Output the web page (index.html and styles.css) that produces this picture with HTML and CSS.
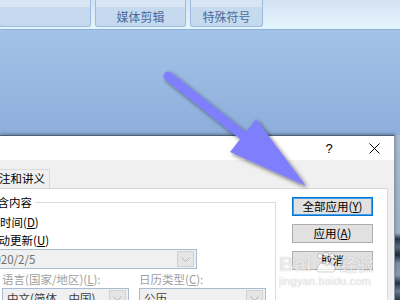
FILE: index.html
```html
<!DOCTYPE html>
<html lang="zh-CN">
<head>
<meta charset="utf-8">
<title>页眉和页脚</title>
<link rel="stylesheet" href="styles.css">
</head>
<body>
<div class="screen">
  <header class="ribbon">
    <div class="rtab rtab-first"><span class="rtab-top"></span><span class="rtab-label"></span></div>
    <div class="rtab rtab-media"><span class="rtab-top"></span><span class="rtab-label">媒体剪辑</span></div>
    <div class="rtab rtab-symbol"><span class="rtab-top"></span><span class="rtab-label">特殊符号</span></div>
  </header>
  <div class="ribbon-edge"></div>
  <div class="workspace"></div>
  <div class="lower">
    <section class="dialog">
      <div class="titlebar">
        <span class="tb-btn tb-help">?</span>
        <span class="tb-btn tb-close">
          <svg width="11" height="11" viewBox="0 0 11 11"><path d="M0.5 0.5 L10.5 10.5 M10.5 0.5 L0.5 10.5" stroke="#000" stroke-width="1" fill="none"/></svg>
        </span>
      </div>
      <div class="client">
        <div class="tabstrip"><div class="dtab">备注和讲义</div></div>
        <div class="panel">
          <div class="group">
            <div class="group-label">包含内容</div>
            <div class="opt opt-date">日期和时间(<u>D</u>)</div>
            <div class="opt opt-auto">自动更新(<u>U</u>)</div>
            <div class="combo combo-date">
              <span class="combo-text combo-text-muted">2020/2/5</span>
              <span class="combo-btn"><svg width="9" height="5" viewBox="0 0 9 5"><path d="M0.5 0.5 L4.5 4.5 L8.5 0.5" stroke="#b4b4b4" fill="none"/></svg></span>
            </div>
            <div class="field-row">
              <div class="field">
                <div class="field-label">语言(国家/地区)(<u>L</u>):</div>
                <div class="combo">
                  <span class="combo-text">中文(简体，中国)</span>
                  <span class="combo-btn"><svg width="9" height="5" viewBox="0 0 9 5"><path d="M0.5 0.5 L4.5 4.5 L8.5 0.5" stroke="#b4b4b4" fill="none"/></svg></span>
                </div>
              </div>
              <div class="field">
                <div class="field-label">日历类型(<u>C</u>):</div>
                <div class="combo">
                  <span class="combo-text">公历</span>
                  <span class="combo-btn"><svg width="9" height="5" viewBox="0 0 9 5"><path d="M0.5 0.5 L4.5 4.5 L8.5 0.5" stroke="#b4b4b4" fill="none"/></svg></span>
                </div>
              </div>
            </div>
          </div>
          <div class="actions">
            <button class="btn btn-default" type="button">全部应用(<u>Y</u>)</button>
            <button class="btn" type="button">应用(<u>A</u>)</button>
            <button class="btn" type="button">取消</button>
          </div>
        </div>
      </div>
    </section>
    <div class="backdrop"></div>
  </div>

  <svg class="arrow" width="400" height="300" viewBox="0 0 400 300" aria-hidden="true">
    <defs>
      <filter id="arrowShadow" x="-20%" y="-20%" width="140%" height="140%">
        <feDropShadow dx="2" dy="2" stdDeviation="2" flood-color="#000" flood-opacity="0.55"/>
      </filter>
    </defs>
    <g filter="url(#arrowShadow)" fill="#7f7ffd">
      <line x1="168" y1="76" x2="246" y2="138" stroke="#7f7ffd" stroke-width="9" stroke-linecap="round"/>
      <polygon points="256,119 306,186 230,152"/>
    </g>
  </svg>

  <div class="watermark" aria-hidden="true">
    <div class="wm-logo">
      <span class="wm-bai">Bai</span>
      <svg class="wm-paw" width="26" height="22" viewBox="0 0 26 22">
        <g fill="rgba(255,255,255,0.75)" stroke="rgba(0,0,0,0.18)" stroke-width="1">
          <circle cx="7" cy="4" r="2.5"/>
          <circle cx="13" cy="2.8" r="2.5"/>
          <circle cx="19" cy="4" r="2.5"/>
          <path d="M6 20 C3 20 3 14 8 11 C11 9 15 9 18 11 C23 14 23 20 20 20 Z"/>
        </g>
      </svg>
      <span class="wm-jy">经验</span>
    </div>
    <div class="wm-url">jingyan.baidu.com</div>
  </div>
</div>
</body>
</html>
```

FILE: styles.css
```css
* {
  box-sizing: border-box;
}

html,
body {
  margin: 0;
  padding: 0;
}

body {
  width: 400px;
  height: 300px;
  overflow: hidden;
  font-family: "Noto Sans CJK SC", "Noto Sans", sans-serif;
  background: #9fbde5;
}

.screen {
  position: relative;
  width: 400px;
  height: 300px;
  overflow: hidden;
  display: flex;
  flex-direction: column;
}

/* ---------- ribbon ---------- */
.ribbon {
  flex: none;
  height: 27px;
  display: flex;
  gap: 4px;
  background: linear-gradient(#d4e2f2, #e4f4fc);
}

.rtab {
  height: 27px;
  display: flex;
  flex-direction: column;
  border: 1px solid #9dbbdf;
  border-top: none;
  border-radius: 0 0 3px 3px;
  background: #c5d9ef;
}

.rtab-first {
  width: 92px;
  margin-left: -1px;
}

.rtab-media {
  width: 91px;
}

.rtab-symbol {
  width: 73px;
}

.rtab-top {
  flex: none;
  height: 7px;
  background: #d8e6f4;
}

.rtab-label {
  flex: 1;
  display: flex;
  align-items: center;
  justify-content: center;
  font-size: 12px;
  line-height: 1;
  color: #4b6c9c;
}

.ribbon-edge {
  flex: none;
  height: 2px;
  background: #e2f6fd;
}

.workspace {
  flex: none;
  height: 106px;
  border-top: 1px solid #8eafd9;
  background: linear-gradient(#a4c3e9, #8eaedb);
}

/* ---------- dialog ---------- */
.lower {
  flex: 1;
  display: flex;
  min-height: 0;
}

.dialog {
  flex: none;
  width: 395px;
  display: flex;
  flex-direction: column;
  border-top: 1px solid #4f5f73;
  border-right: 1px solid #8d9aab;
  background: #f0f0f0;
  box-shadow: 0 -1px 3px rgba(30, 50, 80, 0.45);
  overflow: hidden;
  position: relative;
}

.titlebar {
  flex: none;
  height: 24px;
  display: flex;
  justify-content: flex-end;
  background: #fff;
}

.tb-btn {
  height: 24px;
  display: flex;
  align-items: center;
  justify-content: center;
}

.tb-help {
  width: 42px;
  margin-right: 4px;
  font-family: "Liberation Sans", sans-serif;
  font-size: 13px;
  color: #000;
}

.tb-close {
  width: 40px;
}

.client {
  flex: 1;
  display: flex;
  flex-direction: column;
  padding-top: 9px;
  background: #f0f0f0;
  min-height: 0;
}

.tabstrip {
  flex: none;
  height: 19px;
  display: flex;
}

.dtab {
  width: 71px;
  margin-left: -21px;
  height: 19px;
  border: 1px solid #d9d9d9;
  border-bottom: none;
  background: #f0f0f0;
  text-align: right;
  padding-right: 4px;
  font-size: 11.5px;
  line-height: 17px;
  color: #000;
  white-space: nowrap;
}

.panel {
  flex: 1;
  width: 438px;
  margin-left: -50px;
  display: flex;
  border-top: 1px solid #d9d9d9;
  border-right: 1px solid #d9d9d9;
  background: #fff;
  min-height: 0;
}

.group {
  flex: none;
  width: 326px;
  margin-top: 13px;
  display: flex;
  flex-direction: column;
  border-top: 1px solid #dcdcdc;
  border-right: 1px solid #dcdcdc;
}

.group-label {
  align-self: flex-start;
  margin-top: -8px;
  margin-left: 33px;
  padding: 0 3px;
  background: #fff;
  font-size: 11.5px;
  line-height: 14px;
  color: #000;
  white-space: nowrap;
}

.opt {
  font-size: 11.5px;
  line-height: 18px;
  color: #000;
  white-space: nowrap;
}

.opt-date {
  margin-top: 4px;
  margin-left: 15.5px;
}

.opt-auto {
  margin-left: 37px;
}

.combo {
  height: 20px;
  display: flex;
  align-items: center;
  border: 1px solid #a7bbd3;
  background: #f0f0f0;
}

.combo-date {
  width: 211px;
  margin-left: 36px;
}

.combo-text {
  flex: 1;
  padding-left: 4px;
  font-size: 11.5px;
  line-height: 18px;
  color: #3e3e3e;
  white-space: nowrap;
  overflow: hidden;
}

.combo-date .combo-text {
  padding-left: 1px;
}

.combo-text-muted {
  color: #6d6d6d;
}

.combo-btn {
  flex: none;
  width: 17px;
  height: 16px;
  margin-right: 2px;
  display: flex;
  align-items: center;
  justify-content: center;
  border: 1px solid #d2d2d2;
  background: #e5e5e5;
}

.field-row {
  display: flex;
  gap: 10px;
  margin-top: 1px;
  margin-left: 52px;
}

.field {
  width: 127px;
  display: flex;
  flex-direction: column;
}

.field-label {
  font-size: 11.5px;
  line-height: 18px;
  color: #a0a0a0;
  white-space: nowrap;
}

/* ---------- buttons ---------- */
.actions {
  flex: none;
  width: 81px;
  margin-left: 16px;
  margin-top: 8px;
  display: flex;
  flex-direction: column;
  gap: 8px;
}

.btn {
  height: 19px;
  width: 81px;
  padding: 0;
  border: 1px solid #adadad;
  background: #e1e1e1;
  font-family: "Noto Sans CJK SC", "Noto Sans", sans-serif;
  font-size: 11.5px;
  line-height: 17px;
  color: #000;
}

.btn-default {
  border-color: #0078d7;
  box-shadow: inset 0 0 0 1px #4d9be3;
}

/* ---------- right backdrop ---------- */
.backdrop {
  flex: 1;
  background: linear-gradient(
    #a8bbd2 0,
    #9db1c8 98px,
    #2a3340 104px,
    #5c6b7c 112px,
    #1f2833 120px,
    #7d8ea2 128px,
    #8a9bb0 140px,
    #273140 148px,
    #6e7f93 156px,
    #2b3543 165px
  );
}

/* ---------- overlays ---------- */
.arrow {
  position: absolute;
  left: 0;
  top: 0;
  pointer-events: none;
}

.watermark {
  position: absolute;
  left: 279px;
  top: 252px;
  pointer-events: none;
  color: rgba(255, 255, 255, 0.72);
  text-shadow: 0 0 1px rgba(0, 0, 0, 0.28);
}

.wm-logo {
  display: flex;
  align-items: flex-end;
  height: 22px;
}

.wm-bai {
  font-family: "Liberation Sans", sans-serif;
  font-weight: bold;
  font-size: 21px;
  line-height: 20px;
}

.wm-paw {
  margin: 0 1px;
}

.wm-jy {
  font-size: 17px;
  line-height: 20px;
  font-weight: bold;
}

.wm-url {
  margin-top: 2px;
  font-family: "Liberation Sans", sans-serif;
  font-size: 11px;
  line-height: 11px;
  letter-spacing: 0.2px;
}
```
